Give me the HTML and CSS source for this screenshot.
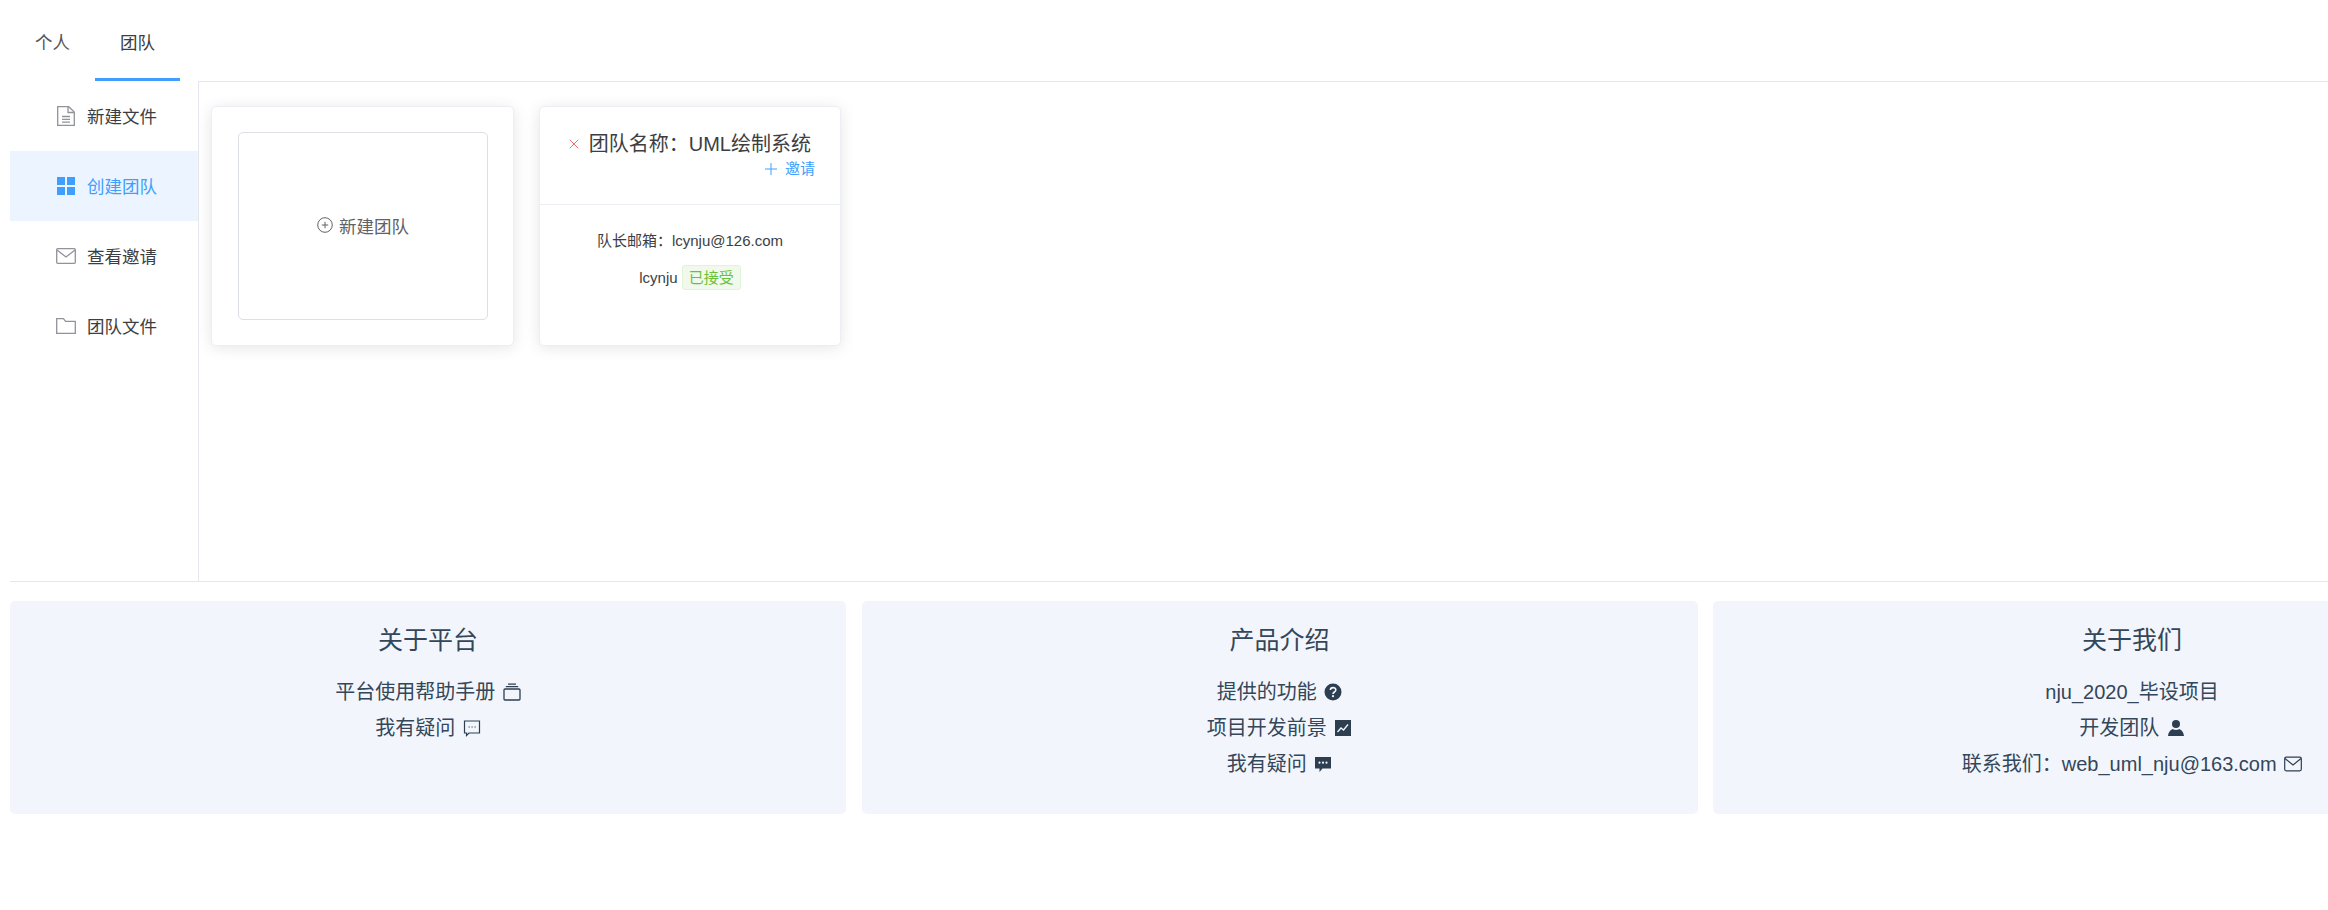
FILE: index.html
```html
<!DOCTYPE html>
<html lang="en">
<head>
    <meta charset="UTF-8">
    <meta name="viewport" content="width=device-width, initial-scale=1.0">
    <title>团队</title>
    <link rel="stylesheet" href="styles.css">
</head>
<body>
<main class="page">
  <div class="tabs">
    <div class="tab">个人</div>
    <div class="tab tab-active">团队</div>
  </div>

  <div class="workspace">
    <nav class="menu">
      <div class="menu-item">
        <svg class="menu-icon" viewBox="0 0 20 20" fill="none" stroke="#909399" stroke-width="1.3"><path d="M1.700 0.700h11L18.300 6v13.300H1.700z"/><path d="M12 1v5.500h6M6 10.500h8M6 13.300h8M6 16.100h8"/></svg>
        新建文件
      </div>
      <div class="menu-item menu-item-active">
        <svg class="menu-icon" viewBox="0 0 20 20" fill="#409eff"><rect x="1" y="1" width="8" height="8"/><rect x="11" y="1" width="8" height="8"/><rect x="1" y="11" width="8" height="8"/><rect x="11" y="11" width="8" height="8"/></svg>
        创建团队
      </div>
      <div class="menu-item">
        <svg class="menu-icon" viewBox="0 0 20 20" fill="none" stroke="#909399" stroke-width="1.3"><rect x="0.700" y="2.700" width="18.600" height="14.600" rx="1"/><path d="M1 4l9 7 9-7"/></svg>
        查看邀请
      </div>
      <div class="menu-item">
        <svg class="menu-icon" viewBox="0 0 20 20" fill="none" stroke="#909399" stroke-width="1.3"><path d="M0.700 2.700h6.800l2 2.600h9.800v12H0.700z"/></svg>
        团队文件
      </div>
    </nav>

    <section class="content">
      <div class="card card-new">
        <div class="new-box">
          <svg class="new-icon" viewBox="0 0 16 16" fill="none" stroke="#606266" stroke-width="1"><circle cx="8" cy="8" r="7.300"/><path d="M8 4.800v6.400M4.800 8h6.400"/></svg>
          新建团队
        </div>
      </div>

      <div class="card card-team">
        <div class="team-head">
          <div class="team-title">
            <svg class="close-icon" viewBox="0 0 10 10" fill="none" stroke="#f56c6c" stroke-width="1"><path d="M0.700 0.700l8.600 8.600M9.300 0.700l-8.600 8.600"/></svg>
            团队名称：UML绘制系统
          </div>
          <div class="team-invite">
            <svg class="plus-icon" viewBox="0 0 12 12" fill="none" stroke="#409eff" stroke-width="1"><path d="M6 0v12M0 6h12"/></svg>
            邀请
          </div>
        </div>
        <div class="team-body">
          <p class="team-line">队长邮箱：lcynju@126.com</p>
          <p class="team-line">lcynju <span class="tag">已接受</span></p>
        </div>
      </div>
    </section>
  </div>

  <footer class="footer">
    <div class="foot-box">
      <h3 class="foot-title">关于平台</h3>
      <p class="foot-line">平台使用帮助手册
        <svg class="foot-icon" viewBox="0 0 18 18" fill="none" stroke="#2c3e50" stroke-width="1.300"><rect x="1" y="6" width="16" height="11" rx="1"/><path d="M2.800 3.700h12.400M5 1.200h8"/></svg>
      </p>
      <p class="foot-line">我有疑问
        <svg class="foot-icon" viewBox="0 0 18 18" fill="none" stroke="#2c3e50" stroke-width="1.200"><path d="M1.500 2h15v12H6L3.500 16.500V14h-2z"/><path d="M5.500 8h1.200M8.500 8h1.200M11.500 8h1.200"/></svg>
      </p>
    </div>

    <div class="foot-box">
      <h3 class="foot-title">产品介绍</h3>
      <p class="foot-line">提供的功能
        <svg class="foot-icon" viewBox="0 0 18 18"><circle cx="9" cy="9" r="8.500" fill="#2c3e50"/><path d="M6.400 7.100c0-3.300 5.400-3.300 5.400-.1 0 2-2.800 2-2.800 4" fill="none" stroke="#f2f6fc" stroke-width="1.600"/><circle cx="9" cy="13.200" r="1.100" fill="#f2f6fc"/></svg>
      </p>
      <p class="foot-line">项目开发前景
        <svg class="foot-icon" viewBox="0 0 18 18"><rect x="1" y="1" width="16" height="16" fill="#2c3e50"/><path d="M3.500 13l3.500-4 2.500 2 4.500-5.500" fill="none" stroke="#f2f6fc" stroke-width="1.300"/></svg>
      </p>
      <p class="foot-line">我有疑问
        <svg class="foot-icon" viewBox="0 0 18 18"><path d="M1 2h16v11.500H8.500L5.500 17v-3.500H1z" fill="#2c3e50"/><circle cx="5.500" cy="7.700" r="1.100" fill="#f2f6fc"/><circle cx="9" cy="7.700" r="1.100" fill="#f2f6fc"/><circle cx="12.500" cy="7.700" r="1.100" fill="#f2f6fc"/></svg>
      </p>
    </div>

    <div class="foot-box foot-box-cut">
      <h3 class="foot-title">关于我们</h3>
      <p class="foot-line">nju_2020_毕设项目</p>
      <p class="foot-line">开发团队
        <svg class="foot-icon" viewBox="0 0 18 18" fill="#2c3e50"><circle cx="9" cy="5" r="4"/><path d="M1 17c.5-4.500 3-6.500 5-7 1 1.200 5 1.200 6 0 2 .5 4.500 2.500 5 7z"/></svg>
      </p>
      <p class="foot-line">联系我们：web_uml_nju@163.com
        <svg class="foot-icon" viewBox="0 0 18 18" fill="none" stroke="#2c3e50" stroke-width="1.200"><rect x="0.700" y="2.200" width="16.600" height="13.600" rx="1.500"/><path d="M1 3.500l8 6.500 8-6.500"/></svg>
      </p>
    </div>
  </footer>
</main>
</body>
</html>
```

FILE: styles.css
```css
* {
  margin: 0;
  padding: 0;
  box-sizing: border-box;
}

body {
  background-color: white;
  font-family: "Liberation Sans", "Noto Sans CJK SC", sans-serif;
  color: #303133;
}

.page {
  padding-left: 10px;
}

.tabs {
  display: flex;
  height: 81px;
}

.tab {
  width: 85px;
  padding-top: 31px;
  text-align: center;
  font-size: 17.5px;
  line-height: 25px;
  color: #555;
}

.tab-active {
  border-bottom: 3px solid #409eff;
  color: #3c3e42;
}

.workspace {
  display: flex;
  height: 501px;
  border-bottom: 1px solid #e4e7ed;
}

.menu {
  width: 189px;
  border-right: 1px solid #e4e7ed;
}

.menu-item {
  display: flex;
  align-items: center;
  gap: 11px;
  height: 70px;
  padding: 0 0 2px 46px;
  font-size: 17.5px;
  color: #3c3e42;
}

.menu-item-active {
  background-color: #ecf5ff;
  color: #409eff;
}

.menu-icon {
  width: 20px;
  height: 20px;
  margin-top: 2px;
}

.content {
  flex: 1;
  display: flex;
  align-items: flex-start;
  gap: 25px;
  padding: 24px 12px;
  border-top: 1px solid #e4e7ed;
}

.card {
  width: 303px;
  height: 240px;
  background-color: white;
  border: 1px solid #ebeef5;
  border-radius: 5px;
  box-shadow: 0 2px 15px rgba(0, 0, 0, 0.1);
}

.card-new {
  padding: 25px 25px 0 26px;
}

.card-team {
  width: 302px;
}

.new-box {
  display: flex;
  align-items: center;
  justify-content: center;
  gap: 6px;
  height: 188px;
  padding-bottom: 2px;
  border: 1px solid #dcdfe6;
  border-radius: 5px;
  font-size: 17.5px;
  color: #606266;
}

.new-icon {
  width: 16px;
  height: 16px;
}

.team-head {
  height: 98px;
  padding: 24px 25px 0 0;
  border-bottom: 1px solid #ebeef5;
}

.team-title {
  display: flex;
  align-items: center;
  justify-content: flex-end;
  gap: 10px;
  font-size: 20px;
  line-height: 26px;
  padding-right: 4px;
  color: #3c3e42;
}

.close-icon {
  width: 10px;
  height: 10px;
}

.team-invite {
  display: flex;
  align-items: center;
  justify-content: flex-end;
  gap: 8px;
  font-size: 15px;
  line-height: 23px;
  color: #409eff;
}

.plus-icon {
  width: 12px;
  height: 12px;
}

.team-body {
  padding-top: 23px;
  text-align: center;
}

.team-line {
  font-size: 15px;
  line-height: 25px;
  margin-bottom: 12px;
  color: #3c3e42;
}

.tag {
  display: inline-block;
  height: 25px;
  padding: 0 6px;
  line-height: 23px;
  font-size: 15px;
  color: #67c23a;
  background-color: #f0f9eb;
  border: 1px solid #e1f3d8;
  border-radius: 3px;
}

.footer {
  display: flex;
  gap: 15.5px;
  margin-top: 19px;
}

.foot-box {
  flex: 0 0 836px;
  height: 213px;
  padding-top: 22px;
  text-align: center;
  background-color: #f2f6fc;
  border-radius: 5px;
  color: #34465a;
}

/* third box runs off the window, text stays centred on its full width */
.foot-box-cut {
  flex: 1 1 0;
  padding-left: 223px;
  border-radius: 5px 0 0 5px;
}

.foot-title {
  font-size: 25px;
  font-weight: normal;
  line-height: 35px;
  margin-bottom: 16px;
}

.foot-line {
  font-size: 20px;
  line-height: 36px;
}

.foot-icon {
  width: 18px;
  height: 18px;
  margin-left: 2px;
  vertical-align: -2px;
}
```
